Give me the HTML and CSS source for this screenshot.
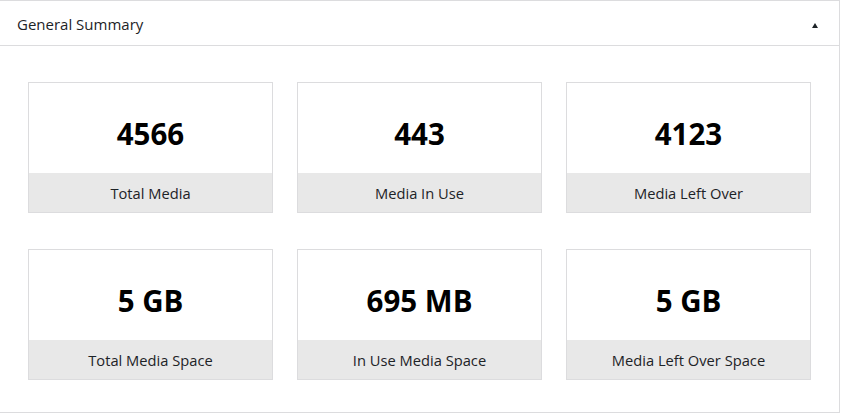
FILE: index.html
```html
<!DOCTYPE html>
<html>
<head>
<meta charset="utf-8">
<link rel="stylesheet" href="styles.css">
</head>
<body>
<div class="panel">
  <div class="panel-header">
    <h2 class="panel-title">General Summary</h2>
    <span class="toggle"></span>
  </div>
  <div class="grid">
    <div class="card"><div class="value">4566</div><div class="label">Total Media</div></div>
    <div class="card"><div class="value">443</div><div class="label">Media In Use</div></div>
    <div class="card"><div class="value">4123</div><div class="label">Media Left Over</div></div>
    <div class="card"><div class="value">5 GB</div><div class="label">Total Media Space</div></div>
    <div class="card"><div class="value">695 MB</div><div class="label">In Use Media Space</div></div>
    <div class="card"><div class="value">5 GB</div><div class="label">Media Left Over Space</div></div>
  </div>
</div>
</body>
</html>
```
FILE: styles.css
```css
html, body {
  margin: 0;
  padding: 0;
  background: #fff;
}
body {
  font-family: "Open Sans", "Noto Sans", sans-serif;
  color: #1d2327;
}
.panel {
  width: 839px;
  border: 1px solid #dcdcde;
  border-left: none;
  background: #fff;
}
.panel-header {
  height: 44px;
  display: flex;
  align-items: center;
  justify-content: space-between;
  padding: 0 21px 0 17px;
  border-bottom: 1px solid #dcdcde;
}
.panel-title {
  margin: 2px 0 0 0;
  font-size: 15px;
  font-weight: 400;
  color: #1d2327;
}
.toggle {
  width: 0;
  height: 0;
  border-left: 3.5px solid transparent;
  border-right: 3.5px solid transparent;
  border-bottom: 5px solid #1d2327;
  margin-top: 4px;
}
.grid {
  display: grid;
  grid-template-columns: repeat(3, 245px);
  column-gap: 24px;
  row-gap: 36px;
  padding: 36px 28px 32px 28px;
}
.card {
  border: 1px solid #dcdcde;
  height: 129px;
  display: flex;
  flex-direction: column;
}
.value {
  height: 80px;
  padding-top: 10px;
  display: flex;
  align-items: center;
  justify-content: center;
  font-size: 29.5px;
  font-weight: 700;
  color: #000;
}
.label {
  flex: 1;
  background: #e8e8e8;
  display: flex;
  align-items: center;
  justify-content: center;
  font-size: 14.7px;
  color: #1d2327;
}
```
